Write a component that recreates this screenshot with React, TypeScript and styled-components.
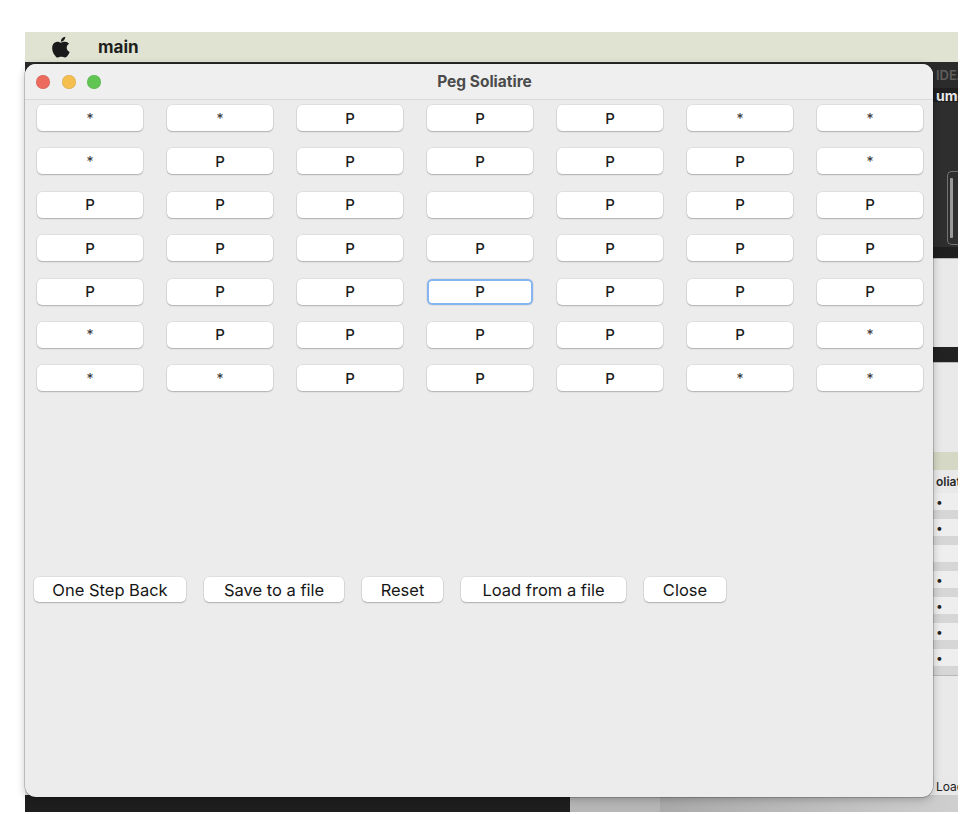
import * as React from 'react';
import styled, { createGlobalStyle, css } from 'styled-components';

const GlobalStyle = createGlobalStyle`
  html, body {
    margin: 0;
    padding: 0;
    background: #ffffff;
  }
  body {
    font-family: Inter, "Noto Sans", "Liberation Sans", sans-serif;
    -webkit-font-smoothing: antialiased;
  }
`;

const Screen = styled.div`
  width: 972px;
  height: 814px;
  padding: 32px 0 0 25px;
  box-sizing: border-box;
  overflow: hidden;
`;

const MenuBar = styled.div`
  width: 933px;
  height: 30px;
  background: #e0e3d2;
  display: flex;
  align-items: center;
  gap: 27px;
  padding-left: 26px;
  box-sizing: border-box;
`;

const MenuTitle = styled.span`
  font-size: 17px;
  font-weight: 700;
  color: #1e1e1e;
`;

const Desktop = styled.div`
  display: grid;
  width: 933px;
  height: 752px;
`;

/* ---------- the app sitting behind the window ---------- */

const BackApp = styled.div`
  grid-area: 1 / 1;
  display: flex;
  flex-direction: column;
  overflow: hidden;
`;

const Band = styled.div<{ $h: number; $bg: string }>`
  height: ${(p) => p.$h}px;
  background: ${(p) => p.$bg};
  display: flex;
  align-items: center;
  justify-content: flex-end;
  flex-shrink: 0;
`;

const SliverText = styled.span<{ $color: string; $weight?: number; $size?: number }>`
  width: 22px;
  overflow: hidden;
  white-space: nowrap;
  font-size: ${(p) => p.$size ?? 13}px;
  font-weight: ${(p) => p.$weight ?? 400};
  color: ${(p) => p.$color};
`;

const OutlineBox = styled.div`
  width: 8px;
  height: 72px;
  border: 1.5px solid #737373;
  border-right: none;
  border-radius: 5px 0 0 5px;
  display: flex;
  align-items: center;
  padding-left: 2px;
`;

const OutlineBar = styled.div`
  width: 3px;
  height: 60px;
  background: #9a9a9a;
  border-radius: 1px;
`;

const LightPanel = styled(Band)`
  background: linear-gradient(90deg, #dcdcdc 0%, #e9e9e9 100%);
  border-top: 1px solid #b8b8b8;
  box-sizing: border-box;
`;

const PegRow = styled.div<{ $grey?: boolean }>`
  height: ${(p) => (p.$grey ? 9 : 17)}px;
  background: ${(p) => (p.$grey ? '#d6d6d6' : '#eeeeee')};
  display: flex;
  align-items: center;
  justify-content: flex-end;
  flex-shrink: 0;
`;

const Dot = styled.span`
  width: 22px;
  font-size: 12px;
  color: #222;
  line-height: 1;
`;

const BottomStrip = styled.div`
  height: 17px;
  display: flex;
  flex-shrink: 0;
`;

const StripPart = styled.div<{ $w?: number; $bg: string }>`
  ${(p) => (p.$w ? css`width: ${p.$w}px;` : css`flex: 1;`)}
  background: ${(p) => p.$bg};
`;

/* ---------- the Peg Soliatire window ---------- */

const Window = styled.div`
  grid-area: 1 / 1;
  align-self: start;
  margin-top: 2px;
  width: 908px;
  height: 733px;
  background: #ececec;
  border-radius: 11px;
  box-shadow: 0 0 0 0.5px rgba(0, 0, 0, 0.35), 0 2px 8px rgba(0, 0, 0, 0.25);
  overflow: hidden;
  display: flex;
  flex-direction: column;
`;

const TitleBar = styled.div`
  height: 36px;
  background: #efefef;
  border-bottom: 1px solid #d9d9d9;
  box-sizing: border-box;
  display: grid;
  grid-template-columns: 1fr auto 1fr;
  align-items: center;
  padding-left: 11px;
`;

const Lights = styled.div`
  display: flex;
  gap: 11.5px;
`;

const Light = styled.span<{ $color: string }>`
  width: 14px;
  height: 14px;
  border-radius: 50%;
  background: ${(p) => p.$color};
  box-shadow: inset 0 0 0 0.5px rgba(0, 0, 0, 0.12);
`;

const Title = styled.div`
  font-size: 15.5px;
  font-weight: 700;
  color: #4b4b4b;
`;

const Board = styled.div`
  display: grid;
  grid-template-columns: repeat(7, 106px);
  column-gap: 24px;
  row-gap: 17.4px;
  padding: 5px 0 0 12px;
`;

const Cell = styled.button<{ $focused?: boolean; $star?: boolean }>`
  height: 26px;
  margin: 0;
  padding: 0;
  border: none;
  border-radius: 5px;
  background: #ffffff;
  font-family: Inter, "Noto Sans", sans-serif;
  font-size: ${(p) => (p.$star ? 14 : 15)}px;
  font-weight: ${(p) => (p.$star ? 400 : 500)};
  color: ${(p) => (p.$star ? '#333' : '#1b1b1b')};
  box-shadow: 0 0 0 0.5px rgba(0, 0, 0, 0.1), 0 1px 1.5px rgba(0, 0, 0, 0.22);
  ${(p) =>
    p.$focused &&
    css`
      box-shadow: inset 0 0 0 2px #86b4f0, 0 0 0 0.5px rgba(0, 0, 0, 0.1);
    `}
`;

const Controls = styled.div`
  display: flex;
  gap: 18px;
  margin-top: 186px;
  padding-left: 9px;
`;

const ActionButton = styled.button<{ $w: number }>`
  width: ${(p) => p.$w}px;
  height: 25px;
  margin: 0;
  padding: 0;
  border: none;
  border-radius: 5px;
  background: #ffffff;
  font-family: Inter, "Noto Sans", sans-serif;
  font-size: 16.5px;
  color: #161616;
  box-shadow: 0 0 0 0.5px rgba(0, 0, 0, 0.1), 0 1px 1.5px rgba(0, 0, 0, 0.22);
`;

const AppleLogo = () => (
  <svg width="20" height="22" viewBox="10 28 152 172" fill="#1a1a1a">
    <path d="M150.37 160.25c-2.45 5.66-5.35 10.870-8.71 15.660-4.58 6.530-8.33 11.050-11.22 13.560-4.48 4.120-9.28 6.230-14.42 6.350-3.69 0-8.14-1.050-13.32-3.180-5.197-2.120-9.973-3.170-14.34-3.170-4.58 0-9.492 1.050-14.746 3.170-5.262 2.130-9.501 3.240-12.742 3.350-4.929 0.210-9.842-1.960-14.746-6.520-3.130-2.730-7.045-7.410-11.735-14.040-5.032-7.080-9.169-15.290-12.410-24.650-3.471-10.110-5.211-19.900-5.211-29.378 0-10.857 2.346-20.221 7.045-28.068 3.693-6.303 8.606-11.275 14.755-14.925s12.793-5.510 19.948-5.629c3.915 0 9.049 1.211 15.429 3.591 6.362 2.388 10.447 3.599 12.238 3.599 1.339 0 5.877-1.416 13.570-4.239 7.275-2.618 13.415-3.702 18.445-3.275 13.630 1.100 23.870 6.473 30.680 16.153-12.190 7.386-18.220 17.731-18.100 31.002 0.110 10.337 3.860 18.939 11.230 25.769 3.340 3.170 7.070 5.620 11.220 7.360-0.900 2.610-1.850 5.110-2.860 7.510zM119.110 37.240c0 8.102-2.960 15.667-8.860 22.669-7.120 8.324-15.732 13.134-25.071 12.375-0.119-0.972-0.188-1.995-0.188-3.070 0-7.778 3.386-16.102 9.399-22.908 3.002-3.446 6.820-6.311 11.450-8.597 4.620-2.252 8.990-3.497 13.100-3.710 0.120 1.083 0.170 2.166 0.170 3.240z" />
  </svg>
);

const board: string[] = [
  '**PPP**',
  '*PPPPP*',
  'PPP PPP',
  'PPPPPPP',
  'PPPPPPP',
  '*PPPPP*',
  '**PPP**',
];

const actions: { label: string; width: number }[] = [
  { label: 'One Step Back', width: 152 },
  { label: 'Save to a file', width: 140 },
  { label: 'Reset', width: 81 },
  { label: 'Load from a file', width: 165 },
  { label: 'Close', width: 82 },
];

const pegRows = [true, true, false, true, true, true, true];

export default function App() {
  return (
    <>
      <GlobalStyle />
      <Screen>
        <MenuBar>
          <AppleLogo />
          <MenuTitle>main</MenuTitle>
        </MenuBar>
        <Desktop>
          <BackApp>
            <Band $h={26} $bg="#2b2b2b">
              <SliverText $color="#5e5e5e" $weight={600}>IDEA</SliverText>
            </Band>
            <Band $h={14} $bg="#1f1f1f">
              <SliverText $color="#e8e8e8" $weight={700} $size={14}>ume</SliverText>
            </Band>
            <Band $h={66} $bg="#2e2e2e" />
            <Band $h={79} $bg="#2e2e2e">
              <OutlineBox>
                <OutlineBar />
              </OutlineBox>
            </Band>
            <Band $h={11} $bg="#1f1f1f" />
            <LightPanel $h={89} $bg="#e5e5e5" />
            <Band $h={15} $bg="#222222" />
            <LightPanel $h={90} $bg="#e6e6e6" />
            <Band $h={18} $bg="#d6d8c6" />
            <Band $h={23} $bg="#e9e9e9">
              <SliverText $color="#2a2a2a" $weight={600} $size={12}>oliatir</SliverText>
            </Band>
            {pegRows.map((hasPeg, i) => (
              <React.Fragment key={i}>
                <PegRow>
                  <Dot>{hasPeg ? '•' : ''}</Dot>
                </PegRow>
                <PegRow $grey />
              </React.Fragment>
            ))}
            <LightPanel $h={103} $bg="#e4e4e4" />
            <Band $h={17} $bg="#e8e8e8">
              <SliverText $color="#222" $size={12}>Load</SliverText>
            </Band>
            <BottomStrip>
              <StripPart $w={545} $bg="#1e1e1e" />
              <StripPart $w={90} $bg="#b6b6b6" />
              <StripPart $bg="linear-gradient(90deg, #a9a9a9 0%, #cfcfcf 100%)" />
            </BottomStrip>
          </BackApp>

          <Window>
            <TitleBar>
              <Lights>
                <Light $color="#ec6a5e" />
                <Light $color="#f4bf4f" />
                <Light $color="#61c554" />
              </Lights>
              <Title>Peg Soliatire</Title>
              <span />
            </TitleBar>
            <Board>
              {board.map((row, r) =>
                row.split('').map((ch, c) => (
                  <Cell key={`${r}-${c}`} $focused={r === 4 && c === 3} $star={ch === '*'}>
                    {ch === ' ' ? '' : ch}
                  </Cell>
                ))
              )}
            </Board>
            <Controls>
              {actions.map((a) => (
                <ActionButton key={a.label} $w={a.width}>
                  {a.label}
                </ActionButton>
              ))}
            </Controls>
          </Window>
        </Desktop>
      </Screen>
    </>
  );
}
